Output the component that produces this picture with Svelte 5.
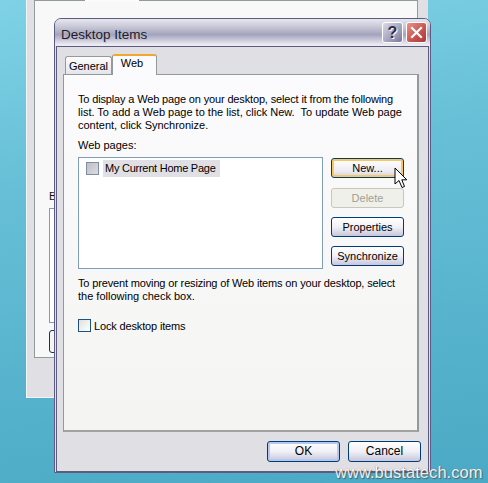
<script>
  const buttons = [
    { label: 'New...', cls: 'focus' },
    { label: 'Delete', cls: 'disabled' },
    { label: 'Properties', cls: '' },
    { label: 'Synchronize', cls: '' }
  ];
</script>

<div class="desktop">
  <div class="backwin">
    <div class="backpage">
      <div class="backtabgap"></div>
      <div class="backlabel">B</div>
      <div class="backbox"></div>
      <div class="backbtn"></div>
    </div>
  </div>

  <div class="dialog">
    <div class="titlebar">
      <span class="title">Desktop Items</span>
      <div class="capbtns">
        <div class="cap help">?</div>
        <div class="cap close">
          <svg width="13" height="13" viewBox="0 0 13 13"><path d="M2 2 L11 11 M11 2 L2 11" stroke="#fff" stroke-width="2.2" stroke-linecap="square" fill="none"/></svg>
        </div>
      </div>
    </div>
    <div class="client">
      <div class="tabs">
        <div class="tab">General</div>
        <div class="tab active">Web</div>
      </div>
      <div class="panel">
        <p class="desc"><span class="tight">To display a Web page on your desktop, select it from the following</span><br>list. To add a Web page to the list, click New.  To update Web page<br>content, click Synchronize.</p>
        <div class="lbl">Web pages:</div>
        <div class="listrow">
          <div class="list">
            <div class="item">
              <span class="chk grey"></span>
              <span class="itemtext">My Current Home Page</span>
            </div>
          </div>
          <div class="sidebtns">
            {#each buttons as b}
              <div class="btn {b.cls}">{b.label}</div>
            {/each}
          </div>
        </div>
        <p class="desc second"><span class="tight">To prevent moving or resizing of Web items on your desktop, select</span><br>the following check box.</p>
        <div class="lock">
          <span class="chk"></span>
          <span class="locktext">Lock desktop items</span>
        </div>
      </div>
      <div class="footer">
        <div class="btn wide default">OK</div>
        <div class="btn wide">Cancel</div>
      </div>
    </div>
  </div>

  <svg class="cursor" width="14" height="23" viewBox="0 0 14 23">
    <path d="M1 1 L1 17 L5 13.5 L8 20.5 L10.5 19.5 L7.8 12.8 L12.8 12.8 Z" fill="#fff" stroke="#000" stroke-width="1"/>
  </svg>

  <div class="wm">www.bustatech.com</div>
</div>

<style>
  :global(body) { margin: 0; }
  .desktop {
    position: relative;
    width: 488px;
    height: 483px;
    overflow: hidden;
    background: linear-gradient(172deg, #7fd2e6 0%, #66bfd6 35%, #4aa9c5 100%);
    font-family: "Liberation Sans", Arial, sans-serif;
    font-size: 11px;
    color: #000;
  }
  .backwin {
    position: absolute;
    left: 26px;
    top: -40px;
    width: 402px;
    height: 438px;
    box-sizing: border-box;
    background: #e0dfe3;
    border-left: 1px solid #f4f4f6;
    border-bottom: 1px solid #f4f4f6;
    padding: 40px 10px 40px 7px;
  }
  .backpage {
    position: relative;
    box-sizing: border-box;
    height: 358px;
    background: #f8f8f8;
    border: 1px solid #919b9c;
    padding: 189px 0 0 14px;
  }
  .backtabgap {
    position: absolute;
    left: 50px;
    top: -1px;
    width: 54px;
    height: 2px;
    background: #fbfbfd;
  }
  .backlabel { height: 13px; line-height: 13px; color: #111; font-size: 11px; }
  .backbox {
    margin-top: 5px;
    height: 113px;
    background: #fff;
    border: 1px solid #7f9db9;
  }
  .backbtn {
    margin-top: 7px;
    height: 21px;
    width: 60px;
    border: 1px solid #003c74;
    border-radius: 3px;
    background: #f4f4f0;
  }
  .dialog {
    position: absolute;
    left: 54px;
    top: 18px;
    width: 377px;
    height: 455px;
    box-sizing: border-box;
    display: flex;
    flex-direction: column;
    background: #e0dfe3;
    border: 1px solid #5d5b80;
    border-radius: 7px 7px 0 0;
  }
  .titlebar {
    height: 27px;
    display: flex;
    align-items: center;
    justify-content: space-between;
    padding: 0 3px 0 6px;
    border-radius: 6px 6px 0 0;
    background: linear-gradient(#e6e6ee 0%, #d4d4e0 18%, #c0c0d2 35%, #a4a3bd 58%, #c4c3d6 75%, #ecebf2 95%);
  }
  .title {
    font-size: 13.5px;
    line-height: 27px;
    position: relative;
    top: 2px;
    color: #1c1c2c;
    text-shadow: 1px 1px 0 #b8b8c8;
  }
  .capbtns { display: flex; gap: 3px; }
  .cap {
    width: 21px;
    height: 21px;
    box-sizing: border-box;
    border-radius: 3px;
    border: 1px solid #fff;
    display: flex;
    align-items: center;
    justify-content: center;
  }
  .help {
    background: linear-gradient(135deg, #d9d9e6, #9897b5 70%, #77769a);
    color: #2d2d4d;
    font: bold 16px "Liberation Sans", sans-serif;
    text-shadow: 1px 1px 0 #fff;
  }
  .close { background: linear-gradient(135deg, #e8928a, #c8514b 60%, #a83a3a); }
  .client {
    flex: 1;
    margin: 0 1px;
    border: 1px solid #5d5b80;
    box-sizing: border-box;
    padding: 7px 9px 9px 6px;
    display: flex;
    flex-direction: column;
    background: #e0dfe3;
  }
  .tabs {
    display: flex;
    align-items: flex-end;
    height: 20px;
    padding-left: 2px;
    position: relative;
    z-index: 1;
  }
  .tab {
    box-sizing: border-box;
    width: 47px;
    height: 18px;
    line-height: 18px;
    text-align: center;
    border: 1px solid #919b9c;
    border-bottom: none;
    border-radius: 3px 3px 0 0;
    background: linear-gradient(#fdfdfd, #e4e4ee);
  }
  .tab.active {
    width: 45px;
    height: 21px;
    margin-bottom: -1px;
    line-height: 15px;
    padding-right: 5px;
    background: #fbfbfd;
    border-top: 2px solid #f0a830;
  }
  .panel {
    box-sizing: border-box;
    height: 358px;
    border: 1px solid #919b9c;
    border-bottom: 2px solid #a0a4a0;
    border-right-width: 2px;
    background: linear-gradient(#fbfbfd, #f4f4f2);
    padding: 18px 14px 0 14px;
  }
  .desc { margin: 0; line-height: 13px; white-space: pre; }
  .tight { letter-spacing: -0.15px; }
  .lbl { margin-top: 7px; line-height: 13px; }
  .listrow { display: flex; gap: 8px; margin-top: 5px; }
  .list {
    flex: none;
    box-sizing: border-box;
    width: 245px;
    height: 112px;
    background: #fff;
    border: 1px solid #7f9db9;
    padding: 2px 0 0 7px;
  }
  .item { display: flex; align-items: center; gap: 4px; }
  .chk {
    display: block;
    flex: none;
    box-sizing: border-box;
    width: 13px;
    height: 13px;
    border: 1px solid #1c5180;
    background: linear-gradient(135deg, #e0e0da, #fff);
  }
  .chk.grey {
    border-color: #7b8ea3;
    background: linear-gradient(135deg, #c0c0c4, #dcdce0);
  }
  .itemtext {
    box-sizing: border-box;
    width: 117px;
    height: 17px;
    line-height: 17px;
    padding-left: 2px;
    background: #e0dfe3;
    white-space: nowrap;
    letter-spacing: -0.25px;
  }
  .locktext { letter-spacing: -0.15px; }
  .sidebtns { flex: none; display: flex; flex-direction: column; gap: 9px; padding-top: 1px; }
  .btn {
    box-sizing: border-box;
    width: 73px;
    height: 20px;
    line-height: 18px;
    text-align: center;
    border: 1px solid #003c74;
    border-radius: 3px;
    background: linear-gradient(#ffffff, #f0f0f6 50%, #c8c6dc);
  }
  .btn.focus {
    box-shadow: inset 0 0 0 2px #f8c860;
    background: linear-gradient(#ffffff, #ecebf2 70%, #d0cee0);
    margin-bottom: 1px;
  }
  .btn.default { box-shadow: inset 0 0 0 2px #b4c8f0; }
  .btn.disabled {
    border-color: #c9c7ba;
    background: #f0f0ea;
    color: #a1a192;
  }
  .second { margin-top: 8px; }
  .lock { display: flex; align-items: center; gap: 3px; margin-top: 16px; }
  .footer {
    display: flex;
    justify-content: flex-end;
    gap: 8px;
    margin: 9px -2px 0 0;
  }
  .btn.wide { height: 21px; line-height: 19px; font-size: 12px; }
  .cursor { position: absolute; left: 394px; top: 167px; }
  .wm {
    position: absolute;
    left: 335px;
    top: 462px;
    font-size: 16.5px;
    line-height: 20px;
    letter-spacing: 0.05px;
    color: #fff;
    text-shadow: 1px 1px 1px #555, 0 0 1px #777;
    opacity: 0.85;
    white-space: nowrap;
  }
</style>
